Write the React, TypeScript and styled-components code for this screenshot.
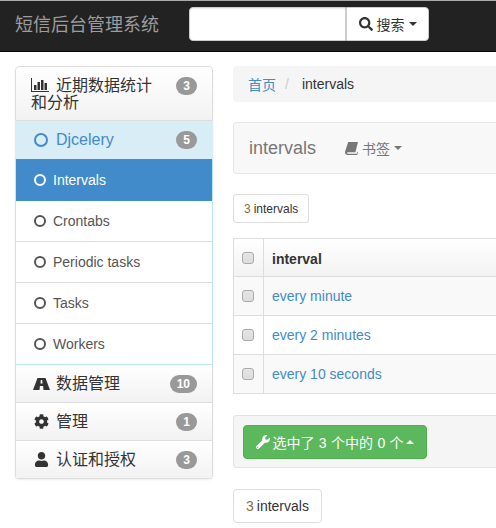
import styled, { createGlobalStyle } from 'styled-components';
import { FaCog, FaSearch, FaUser, FaWrench } from 'react-icons/fa';

const FONT = '"Liberation Sans", Arial, "Noto Sans CJK SC", sans-serif';

const GlobalStyle = createGlobalStyle`
  html, body {
    margin: 0;
    padding: 0;
    background: #fff;
    font-family: ${FONT};
    font-size: 14px;
    color: #333;
  }
  * { box-sizing: border-box; }
`;

const NavBar = styled.div`
  height: 52px;
  background: #222;
  border-top: 1px solid #aaa;
  border-bottom: 1px solid #080808;
  display: flex;
  align-items: flex-start;
  padding: 6px 0 0 15px;
`;

const Brand = styled.div`
  width: 174px;
  font-size: 18px;
  line-height: 36px;
  color: #9d9d9d;
`;

const SearchInput = styled.div`
  width: 157px;
  height: 34px;
  background: #fff;
  border: 1px solid #ccc;
  border-radius: 4px 0 0 4px;
  box-shadow: inset 0 1px 1px rgba(0, 0, 0, 0.075);
`;

const SearchButton = styled.div`
  width: 83px;
  height: 34px;
  background: #fff;
  border: 1px solid #ccc;
  border-radius: 0 4px 4px 0;
  display: flex;
  align-items: center;
  justify-content: center;
  gap: 4px;
  color: #333;
  svg { width: 14px; height: 14px; }
`;

const Caret = styled.span<{ $up?: boolean }>`
  display: inline-block;
  width: 0;
  height: 0;
  border-left: 4px solid transparent;
  border-right: 4px solid transparent;
  ${(p) => (p.$up ? 'border-bottom: 4px solid currentColor;' : 'border-top: 4px solid currentColor;')}
`;

const Page = styled.div`
  display: flex;
  gap: 20px;
  padding: 14px 0 0 15px;
`;

const Sidebar = styled.div`
  width: 198px;
  flex: none;
  align-self: flex-start;
  border-radius: 4px;
  box-shadow: 0 1px 2px rgba(0, 0, 0, 0.075);
  overflow: hidden;
`;

const GroupHead = styled.div<{ $tall?: boolean }>`
  min-height: ${(p) => (p.$tall ? '55px' : '38px')};
  padding: ${(p) => (p.$tall ? '10px 15px 0 15px' : '0 15px 0 17px')};
  display: flex;
  align-items: ${(p) => (p.$tall ? 'flex-start' : 'center')};
  justify-content: space-between;
  background: linear-gradient(to bottom, #fff, #f2f2f2);
  border: 1px solid #ddd;
  border-width: ${(p) => (p.$tall ? '1px' : '0 1px 1px')};
  border-radius: ${(p) => (p.$tall ? '4px 4px 0 0' : '0')};
  font-size: 16px;
  line-height: 17px;
  color: #333;
`;

const GroupLabel = styled.span`
  display: flex;
  align-items: center;
  gap: 7px;
`;

const IconBox = styled.span`
  width: 16px;
  height: 16px;
  flex: none;
  display: flex;
  align-items: center;
  justify-content: center;
  svg { width: 15px; height: 15px; }
`;

const RoadIcon = styled.svg`
  && { width: 17px; height: 12px; }
  flex: none;
`;

const ChartIcon = styled.svg`
  width: 18px;
  height: 14px;
  vertical-align: -1px;
  margin-right: 7px;
`;

const BookIcon = styled.svg`
  width: 13px;
  height: 13px;
`;

const TallLabel = styled.span`
  width: 125px;
`;

const Badge = styled.span`
  flex: none;
  min-width: 21px;
  height: 18px;
  padding: 0 7px;
  border-radius: 9px;
  background: #999;
  color: #fff;
  font-size: 12px;
  font-weight: bold;
  line-height: 18px;
  text-align: center;
`;

const SubHead = styled.div`
  height: 38px;
  padding: 0 15px 0 18px;
  display: flex;
  align-items: center;
  justify-content: space-between;
  background: #d9edf7;
  color: #428bca;
  font-size: 16px;
  border: 1px solid #d9edf7;
  border-width: 0 1px;
`;

const SubList = styled.div`
  border: 1px solid #bce8f1;
  border-width: 0 1px 1px;
`;

const SubItem = styled.div<{ $active?: boolean }>`
  height: ${(p) => (p.$active ? '42px' : '41px')};
  padding-left: 18px;
  display: flex;
  align-items: center;
  gap: 7px;
  background: ${(p) => (p.$active ? '#428bca' : '#fff')};
  color: ${(p) => (p.$active ? '#fff' : '#555')};
  border-bottom: ${(p) => (p.$active ? 'none' : '1px solid #ddd')};
  &:last-child {
    height: 40px;
    border-bottom: none;
  }
`;

const Ring = styled.span<{ $big?: boolean }>`
  flex: none;
  width: ${(p) => (p.$big ? '14px' : '12px')};
  height: ${(p) => (p.$big ? '14px' : '12px')};
  border: 2px solid currentColor;
  border-radius: 50%;
  margin-right: ${(p) => (p.$big ? '8px' : '0')};
`;

const SubLabel = styled.span`
  display: flex;
  align-items: center;
`;

const Main = styled.div`
  flex: 1;
  min-width: 0;
  display: flex;
  flex-direction: column;
  align-items: flex-start;
`;

const Breadcrumb = styled.div`
  width: 100%;
  height: 36px;
  background: #f5f5f5;
  border-radius: 4px 0 0 4px;
  padding: 0 0 1px 15px;
  display: flex;
  align-items: center;
  a { color: #428bca; }
`;

const Slash = styled.span`
  color: #ccc;
  padding: 0 9px;
  margin-right: 4px;
`;

const PanelHead = styled.div`
  width: 100%;
  height: 52px;
  margin-top: 20px;
  background: #f8f8f8;
  border: 1px solid #e7e7e7;
  border-right: 0;
  border-radius: 4px 0 0 4px;
  padding-left: 15px;
  display: flex;
  align-items: center;
`;

const PanelTitle = styled.span`
  font-size: 18px;
  color: #777;
  width: 96px;
`;

const Bookmarks = styled.span`
  display: flex;
  align-items: center;
  gap: 4px;
  color: #777;
`;

const Pager = styled.div<{ $large?: boolean }>`
  height: ${(p) => (p.$large ? '34px' : '29px')};
  margin-top: ${(p) => (p.$large ? '21px' : '20px')};
  padding: 0 ${(p) => (p.$large ? '12px' : '10px')};
  border: 1px solid #ddd;
  border-radius: ${(p) => (p.$large ? '4px' : '3px')};
  font-size: ${(p) => (p.$large ? '14px' : '12px')};
  display: flex;
  align-items: center;
  color: #333;
`;

const Count = styled.span`
  color: #8a6d3b;
  margin-right: 3px;
`;

const Table = styled.div`
  width: 100%;
  margin-top: 15px;
  border: 1px solid #ddd;
  border-width: 1px 0 0 1px;
`;

const Row = styled.div<{ $head?: boolean; $odd?: boolean }>`
  height: ${(p) => (p.$head ? '38px' : '39px')};
  display: flex;
  border-bottom: 1px solid #ddd;
  background: ${(p) =>
    p.$head ? 'linear-gradient(to bottom, #fff, #f2f2f2)' : p.$odd ? '#f9f9f9' : '#fff'};
`;

const CheckCell = styled.div`
  width: 30px;
  flex: none;
  padding-right: 1px;
  border-right: 1px solid #ddd;
  display: flex;
  align-items: center;
  justify-content: center;
`;

const Check = styled.span`
  width: 12px;
  height: 12px;
  border: 1px solid #aaa;
  border-radius: 3px;
  background: linear-gradient(to bottom, #e4e4e4, #ddd);
`;

const Cell = styled.div<{ $head?: boolean }>`
  padding: ${(p) => (p.$head ? '2px' : '0')} 0 0 8px;
  display: flex;
  align-items: center;
  font-weight: ${(p) => (p.$head ? 'bold' : 'normal')};
  color: ${(p) => (p.$head ? '#333' : '#428bca')};
`;

const ActionBar = styled.div`
  width: 100%;
  height: 53px;
  margin-top: 21px;
  padding: 9px;
  background: #f5f5f5;
  border: 1px solid #e3e3e3;
  border-right: 0;
  border-radius: 4px 0 0 4px;
`;

const ActionButton = styled.div`
  width: 184px;
  height: 34px;
  background: #5cb85c;
  border: 1px solid #4cae4c;
  border-radius: 4px;
  color: #fff;
  display: flex;
  align-items: center;
  justify-content: center;
  gap: 2px;
  word-spacing: 0.5px;
  svg { width: 14px; height: 14px; }
`;

const sections = ['Intervals', 'Crontabs', 'Periodic tasks', 'Tasks', 'Workers'];
const rows = ['every minute', 'every 2 minutes', 'every 10 seconds'];

export default function App() {
  return (
    <>
      <GlobalStyle />
      <NavBar>
        <Brand>短信后台管理系统</Brand>
        <SearchInput />
        <SearchButton>
          <FaSearch /> 搜索 <Caret />
        </SearchButton>
      </NavBar>
      <Page>
        <Sidebar>
          <GroupHead $tall>
            <TallLabel>
              <ChartIcon viewBox="0 0 18 14">
                <path d="M0 0h1v13h17v1H0z" fill="#333" />
                <path d="M3 7h2.5v5H3z" fill="#333" />
                <path d="M6.5 4H9v8H6.5z" fill="#333" />
                <path d="M10 2h2.5v10H10z" fill="#333" />
                <path d="M13.5 5H16v7h-2.5z" fill="#333" />
              </ChartIcon>
              近期数据统计和分析
            </TallLabel>
            <Badge>3</Badge>
          </GroupHead>
          <SubHead>
            <SubLabel>
              <Ring $big />
              Djcelery
            </SubLabel>
            <Badge>5</Badge>
          </SubHead>
          <SubList>
            {sections.map((s, i) => (
              <SubItem key={s} $active={i === 0}>
                <Ring />
                {s}
              </SubItem>
            ))}
          </SubList>
          <GroupHead>
            <GroupLabel>
              <IconBox>
                <RoadIcon viewBox="0 0 17 12">
                  <path
                    fillRule="evenodd"
                    d="M4.5 0h8L17 12h-6.5l-.4-4H6.9l-.4 4H0zM7.8 2l-.3 3.5h2L9.2 2z"
                    fill="#333"
                  />
                </RoadIcon>
              </IconBox>
              数据管理
            </GroupLabel>
            <Badge>10</Badge>
          </GroupHead>
          <GroupHead>
            <GroupLabel>
              <IconBox>
                <FaCog />
              </IconBox>
              管理
            </GroupLabel>
            <Badge>1</Badge>
          </GroupHead>
          <GroupHead>
            <GroupLabel>
              <IconBox>
                <FaUser />
              </IconBox>
              认证和授权
            </GroupLabel>
            <Badge>3</Badge>
          </GroupHead>
        </Sidebar>
        <Main>
          <Breadcrumb>
            <a>首页</a>
            <Slash>/</Slash>
            intervals
          </Breadcrumb>
          <PanelHead>
            <PanelTitle>intervals</PanelTitle>
            <Bookmarks>
              <BookIcon viewBox="0 0 13 13">
                <path
                  d="M3.2 0H13l-2.6 10.2H3c-.8 0-1.1.4-1 .9.1.4.4.7 1 .7h8.8l.6-2 .6.4-.9 2.8H2.6C1.2 13 .2 12 0 10.8c-.1-.5 0-1 .2-1.5z"
                  fill="#777"
                />
              </BookIcon>
              书签 <Caret />
            </Bookmarks>
          </PanelHead>
          <Pager>
            <Count>3</Count> intervals
          </Pager>
          <Table>
            <Row $head>
              <CheckCell>
                <Check />
              </CheckCell>
              <Cell $head>interval</Cell>
            </Row>
            {rows.map((r, i) => (
              <Row key={r} $odd={i !== 1}>
                <CheckCell>
                  <Check />
                </CheckCell>
                <Cell>{r}</Cell>
              </Row>
            ))}
          </Table>
          <ActionBar>
            <ActionButton>
              <FaWrench /> 选中了 3 个中的 0 个 <Caret $up />
            </ActionButton>
          </ActionBar>
          <Pager $large>
            <Count>3</Count> intervals
          </Pager>
        </Main>
      </Page>
    </>
  );
}
